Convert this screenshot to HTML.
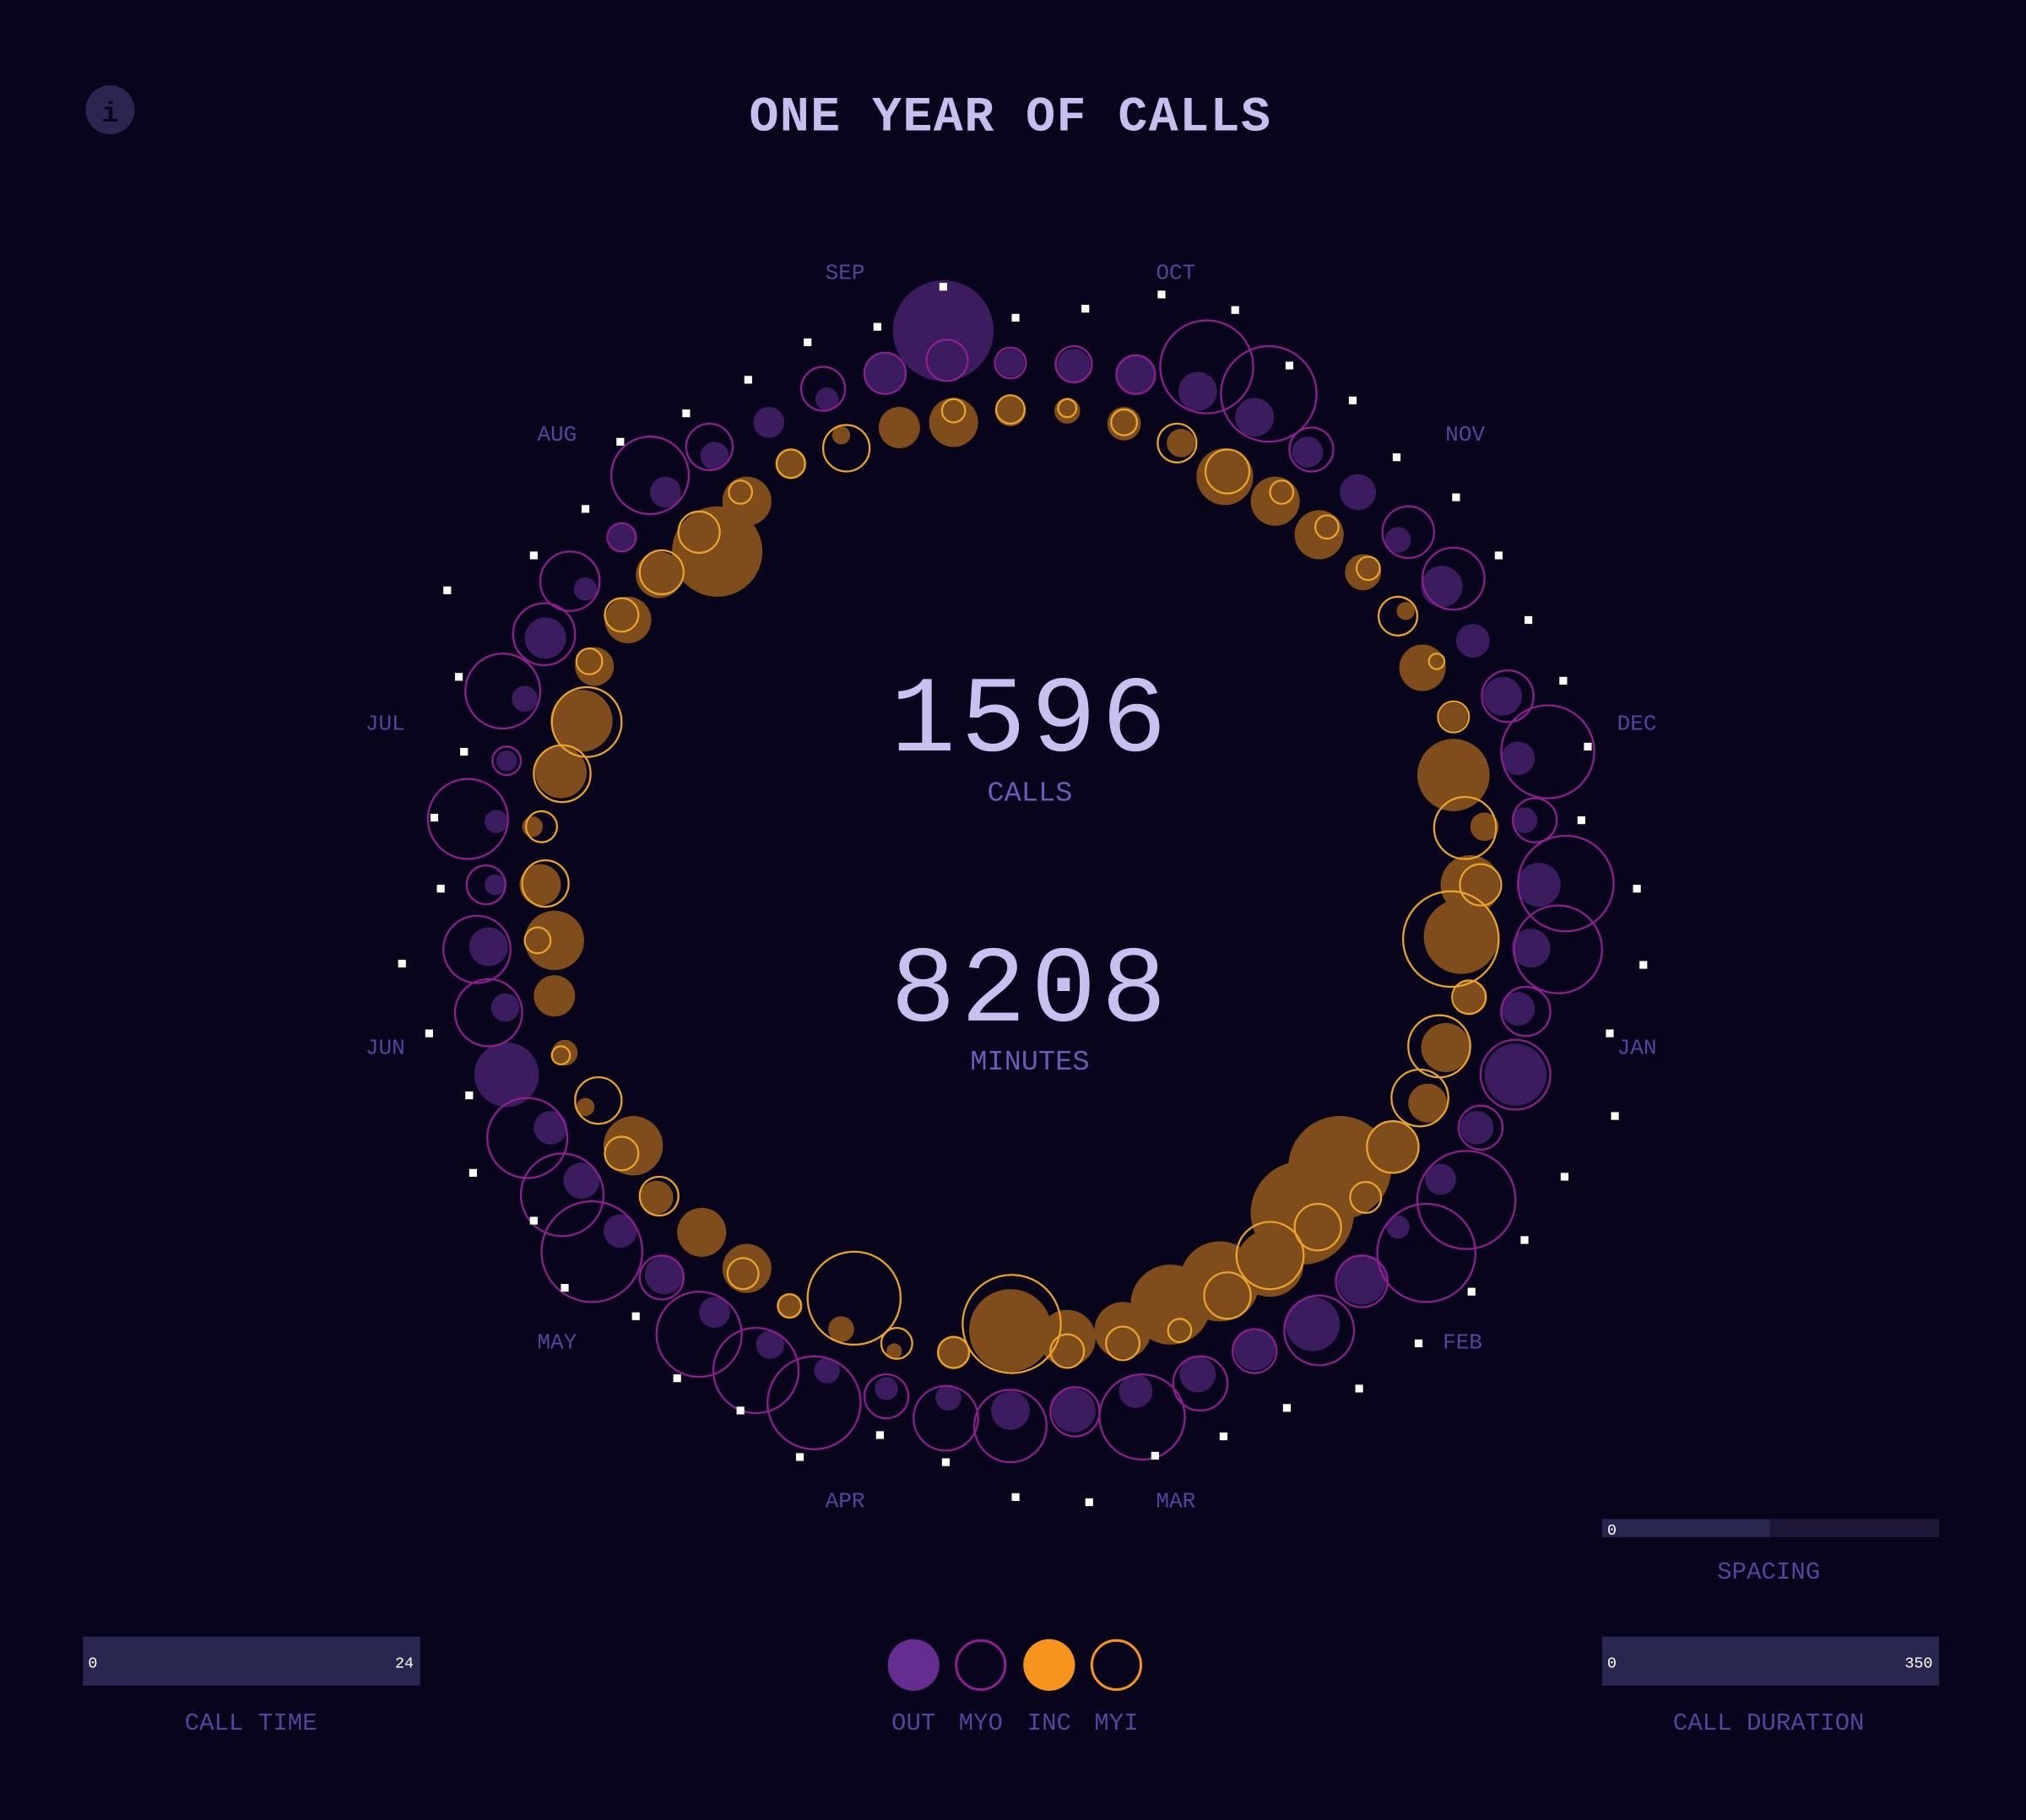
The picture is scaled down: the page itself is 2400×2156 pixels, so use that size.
<!DOCTYPE html>
<html><head><meta charset="utf-8"><style>
html,body{margin:0;padding:0;background:#07041c;}
svg{display:block}
text{font-family:"Liberation Mono","DejaVu Sans Mono",monospace}
</style></head><body>
<svg width="2400" height="2156" viewBox="0 0 1568 1409" xmlns="http://www.w3.org/2000/svg">
<rect width="1568" height="1409" fill="#07041c"/>
<circle cx="85" cy="85" r="19" fill="#2a2650"/>
<text x="85" y="94" font-size="22" font-weight="bold" fill="#07041c" text-anchor="middle" font-family="Liberation Serif">i</text>
<text x="782" y="101" font-size="38" font-weight="bold" fill="#c5bfee" text-anchor="middle" letter-spacing="1">ONE YEAR OF CALLS</text>

<g fill="#3e1f63" opacity="0.95">
<circle cx="730" cy="256" r="39"/><circle cx="685" cy="289" r="16"/><circle cx="782" cy="281" r="11"/><circle cx="831" cy="283" r="13"/><circle cx="879" cy="290" r="15"/><circle cx="927" cy="303" r="15"/><circle cx="971" cy="323" r="15"/><circle cx="1012" cy="350" r="12"/><circle cx="1051" cy="381" r="14"/><circle cx="1082" cy="418" r="10"/><circle cx="1116" cy="454" r="16"/><circle cx="1140" cy="496" r="13"/><circle cx="1163" cy="539" r="15"/><circle cx="1175" cy="587" r="13"/><circle cx="1180" cy="635" r="10"/><circle cx="1191" cy="685" r="17"/><circle cx="1185" cy="734" r="15"/><circle cx="1175" cy="781" r="13"/><circle cx="1173" cy="832" r="24"/><circle cx="1143" cy="873" r="13"/><circle cx="1115" cy="913" r="12"/><circle cx="1082" cy="950" r="9"/><circle cx="1054" cy="991" r="19"/><circle cx="1016" cy="1025" r="21"/><circle cx="971" cy="1045" r="16"/><circle cx="927" cy="1064" r="14"/><circle cx="879" cy="1077" r="13"/><circle cx="831" cy="1092" r="17"/><circle cx="782" cy="1092" r="15"/><circle cx="734" cy="1082" r="10"/><circle cx="686" cy="1075" r="9"/><circle cx="640" cy="1061" r="10"/><circle cx="596" cy="1041" r="11"/><circle cx="553" cy="1016" r="12"/><circle cx="514" cy="987" r="15"/><circle cx="480" cy="953" r="13"/><circle cx="450" cy="914" r="14"/><circle cx="426" cy="873" r="13"/><circle cx="392" cy="832" r="25"/><circle cx="391" cy="780" r="11"/><circle cx="378" cy="733" r="15"/><circle cx="383" cy="685" r="8"/><circle cx="384" cy="636" r="9"/><circle cx="392" cy="589" r="8"/><circle cx="406" cy="541" r="10"/><circle cx="422" cy="494" r="16"/><circle cx="453" cy="456" r="9"/><circle cx="482" cy="416" r="11"/><circle cx="515" cy="381" r="12"/><circle cx="553" cy="353" r="11"/><circle cx="595" cy="327" r="12"/><circle cx="640" cy="309" r="9"/>
</g>
<g fill="none" stroke="#8e1f8e" stroke-width="1.5">
<circle cx="733" cy="279" r="16"/><circle cx="934" cy="284" r="36"/><circle cx="982" cy="305" r="37"/><circle cx="1015" cy="348" r="17"/><circle cx="1090" cy="412" r="20"/><circle cx="1125" cy="448" r="24"/><circle cx="1167" cy="539" r="20"/><circle cx="1198" cy="582" r="36"/><circle cx="1188" cy="635" r="17"/><circle cx="1212" cy="684" r="37"/><circle cx="1206" cy="735" r="34"/><circle cx="1181" cy="783" r="19"/><circle cx="1173" cy="832" r="27"/><circle cx="1146" cy="873" r="17"/><circle cx="1135" cy="929" r="38"/><circle cx="1104" cy="970" r="38"/><circle cx="1054" cy="992" r="20"/><circle cx="1021" cy="1030" r="27"/><circle cx="971" cy="1046" r="17"/><circle cx="929" cy="1071" r="21"/><circle cx="884" cy="1097" r="33"/><circle cx="832" cy="1093" r="19"/><circle cx="782" cy="1104" r="28"/><circle cx="732" cy="1098" r="25"/><circle cx="686" cy="1081" r="17"/><circle cx="630" cy="1086" r="36"/><circle cx="585" cy="1061" r="33"/><circle cx="541" cy="1033" r="33"/><circle cx="512" cy="989" r="17"/><circle cx="458" cy="969" r="39"/><circle cx="435" cy="925" r="32"/><circle cx="408" cy="881" r="31"/><circle cx="378" cy="784" r="26"/><circle cx="369" cy="735" r="26"/><circle cx="376" cy="685" r="15"/><circle cx="362" cy="634" r="31"/><circle cx="392" cy="589" r="11"/><circle cx="389" cy="535" r="29"/><circle cx="421" cy="491" r="24"/><circle cx="441" cy="450" r="23"/><circle cx="481" cy="416" r="11"/><circle cx="503" cy="368" r="30"/><circle cx="549" cy="346" r="18"/><circle cx="637" cy="301" r="17"/><circle cx="685" cy="289" r="16"/><circle cx="782" cy="281" r="12"/><circle cx="831" cy="282" r="14"/><circle cx="879" cy="290" r="15"/>
</g>
<g fill="#f7941d" opacity="0.5">
<circle cx="555" cy="427" r="35"/><circle cx="578" cy="388" r="19"/><circle cx="510" cy="445" r="18"/><circle cx="486" cy="480" r="18"/><circle cx="460" cy="516" r="15"/><circle cx="450" cy="558" r="24"/><circle cx="434" cy="598" r="20"/><circle cx="412" cy="640" r="8"/><circle cx="418" cy="685" r="16"/><circle cx="429" cy="728" r="23"/><circle cx="429" cy="771" r="16"/><circle cx="437" cy="815" r="10"/><circle cx="453" cy="857" r="7"/><circle cx="490" cy="887" r="23"/><circle cx="508" cy="927" r="13"/><circle cx="543" cy="954" r="19"/><circle cx="578" cy="982" r="19"/><circle cx="611" cy="1011" r="10"/><circle cx="651" cy="1029" r="10"/><circle cx="692" cy="1046" r="6"/><circle cx="738" cy="1047" r="13"/><circle cx="782" cy="1030" r="32"/><circle cx="826" cy="1036" r="22"/><circle cx="869" cy="1030" r="22"/><circle cx="906" cy="1010" r="31"/><circle cx="944" cy="992" r="31"/><circle cx="983" cy="978" r="26"/><circle cx="1008" cy="939" r="40"/><circle cx="1037" cy="904" r="40"/><circle cx="1022" cy="952" r="20"/><circle cx="1078" cy="888" r="20"/><circle cx="1105" cy="854" r="15"/><circle cx="1119" cy="811" r="19"/><circle cx="1138" cy="772" r="13"/><circle cx="1131" cy="725" r="29"/><circle cx="1138" cy="685" r="23"/><circle cx="1149" cy="640" r="11"/><circle cx="1125" cy="600" r="28"/><circle cx="1125" cy="555" r="11"/><circle cx="1101" cy="517" r="18"/><circle cx="1088" cy="473" r="7"/><circle cx="1055" cy="443" r="14"/><circle cx="1021" cy="414" r="19"/><circle cx="987" cy="388" r="19"/><circle cx="948" cy="369" r="22"/><circle cx="914" cy="343" r="11"/><circle cx="870" cy="328" r="13"/><circle cx="826" cy="318" r="10"/><circle cx="782" cy="318" r="12"/><circle cx="738" cy="327" r="19"/><circle cx="696" cy="331" r="16"/><circle cx="651" cy="337" r="7"/><circle cx="612" cy="359" r="12"/>
</g>
<g fill="none" stroke="#e8a32c" stroke-width="1.5">
<circle cx="541" cy="412" r="16"/><circle cx="573" cy="381" r="9"/><circle cx="512" cy="443" r="17"/><circle cx="481" cy="476" r="13"/><circle cx="456" cy="512" r="10"/><circle cx="454" cy="559" r="27"/><circle cx="435" cy="599" r="22"/><circle cx="419" cy="640" r="12"/><circle cx="422" cy="684" r="18"/><circle cx="416" cy="728" r="10"/><circle cx="434" cy="817" r="7"/><circle cx="463" cy="852" r="18"/><circle cx="481" cy="893" r="13"/><circle cx="510" cy="926" r="15"/><circle cx="575" cy="986" r="12"/><circle cx="611" cy="1011" r="9"/><circle cx="661" cy="1005" r="36"/><circle cx="694" cy="1040" r="12"/><circle cx="738" cy="1047" r="12"/><circle cx="783" cy="1025" r="38"/><circle cx="826" cy="1046" r="13"/><circle cx="869" cy="1040" r="13"/><circle cx="913" cy="1030" r="9"/><circle cx="950" cy="1003" r="18"/><circle cx="983" cy="972" r="26"/><circle cx="1020" cy="950" r="18"/><circle cx="1057" cy="927" r="12"/><circle cx="1078" cy="888" r="20"/><circle cx="1099" cy="850" r="22"/><circle cx="1114" cy="810" r="24"/><circle cx="1137" cy="772" r="13"/><circle cx="1123" cy="727" r="37"/><circle cx="1146" cy="685" r="16"/><circle cx="1134" cy="641" r="24"/><circle cx="1125" cy="555" r="12"/><circle cx="1112" cy="512" r="6"/><circle cx="1082" cy="477" r="15"/><circle cx="1059" cy="440" r="9"/><circle cx="1027" cy="408" r="9"/><circle cx="992" cy="381" r="9"/><circle cx="950" cy="365" r="17"/><circle cx="911" cy="343" r="15"/><circle cx="870" cy="327" r="10"/><circle cx="826" cy="316" r="7"/><circle cx="782" cy="317" r="11"/><circle cx="738" cy="318" r="9"/><circle cx="655" cy="347" r="18"/><circle cx="612" cy="359" r="11"/>
</g>
<g fill="#ffffff">
<rect x="727" y="219" width="6" height="6"/><rect x="783" y="243" width="6" height="6"/><rect x="837" y="236" width="6" height="6"/><rect x="896" y="225" width="6" height="6"/><rect x="953" y="237" width="6" height="6"/><rect x="995" y="280" width="6" height="6"/><rect x="1044" y="307" width="6" height="6"/><rect x="1078" y="351" width="6" height="6"/><rect x="1124" y="382" width="6" height="6"/><rect x="1157" y="427" width="6" height="6"/><rect x="1180" y="477" width="6" height="6"/><rect x="1207" y="524" width="6" height="6"/><rect x="1226" y="575" width="6" height="6"/><rect x="1221" y="632" width="6" height="6"/><rect x="1264" y="685" width="6" height="6"/><rect x="1269" y="744" width="6" height="6"/><rect x="1243" y="797" width="6" height="6"/><rect x="1247" y="861" width="6" height="6"/><rect x="1208" y="908" width="6" height="6"/><rect x="1177" y="957" width="6" height="6"/><rect x="1136" y="997" width="6" height="6"/><rect x="1095" y="1037" width="6" height="6"/><rect x="1049" y="1072" width="6" height="6"/><rect x="993" y="1087" width="6" height="6"/><rect x="944" y="1109" width="6" height="6"/><rect x="891" y="1124" width="6" height="6"/><rect x="840" y="1160" width="6" height="6"/><rect x="783" y="1156" width="6" height="6"/><rect x="729" y="1129" width="6" height="6"/><rect x="678" y="1108" width="6" height="6"/><rect x="616" y="1125" width="6" height="6"/><rect x="570" y="1089" width="6" height="6"/><rect x="521" y="1064" width="6" height="6"/><rect x="489" y="1016" width="6" height="6"/><rect x="434" y="994" width="6" height="6"/><rect x="410" y="942" width="6" height="6"/><rect x="363" y="905" width="6" height="6"/><rect x="360" y="845" width="6" height="6"/><rect x="329" y="797" width="6" height="6"/><rect x="308" y="743" width="6" height="6"/><rect x="338" y="685" width="6" height="6"/><rect x="333" y="630" width="6" height="6"/><rect x="356" y="579" width="6" height="6"/><rect x="352" y="521" width="6" height="6"/><rect x="343" y="454" width="6" height="6"/><rect x="410" y="427" width="6" height="6"/><rect x="450" y="391" width="6" height="6"/><rect x="477" y="339" width="6" height="6"/><rect x="528" y="317" width="6" height="6"/><rect x="576" y="291" width="6" height="6"/><rect x="622" y="262" width="6" height="6"/><rect x="676" y="250" width="6" height="6"/>
</g>
<g font-size="17" fill="#54469a" text-anchor="middle">
<text x="654" y="216">SEP</text><text x="910" y="216">OCT</text><text x="1134" y="341">NOV</text><text x="1267" y="565">DEC</text><text x="1267" y="816">JAN</text><text x="1132" y="1044">FEB</text><text x="910" y="1167">MAR</text><text x="654" y="1167">APR</text><text x="431" y="1044">MAY</text><text x="298" y="816">JUN</text><text x="298" y="565">JUL</text><text x="431" y="341">AUG</text>
</g>
<g fill="#c8c0ee" text-anchor="middle">
<text x="798" y="581" font-size="84" letter-spacing="4">1596</text>
<text x="798" y="790" font-size="84" letter-spacing="4">8208</text>
</g>
<g fill="#6a5cb8" text-anchor="middle" font-size="22">
<text x="797" y="620">CALLS</text><text x="797" y="828">MINUTES</text>
</g>
<rect x="64" y="1267" width="261" height="38" fill="#29264f"/>
<rect x="1240" y="1267" width="261" height="38" fill="#29264f"/>
<rect x="1240" y="1176" width="261" height="14" fill="#1e1738"/>
<rect x="1240" y="1176" width="130" height="14" fill="#29264f"/>
<g fill="#ffffff" font-size="12">
<text x="68" y="1291">0</text><text x="320" y="1291" text-anchor="end">24</text>
<text x="1244" y="1291">0</text><text x="1496" y="1291" text-anchor="end">350</text>
<text x="1244" y="1188">0</text>
</g>
<circle cx="707" cy="1289" r="20" fill="#662d91"/>
<circle cx="759" cy="1289" r="19" fill="none" stroke="#8e1f8e" stroke-width="2"/>
<circle cx="812" cy="1289" r="20" fill="#f7941d"/>
<circle cx="864" cy="1289" r="19" fill="none" stroke="#f7941d" stroke-width="2"/>
<g font-size="19" fill="#54469a" text-anchor="middle">
<text x="707" y="1339">OUT</text><text x="759" y="1339">MYO</text><text x="812" y="1339">INC</text><text x="864" y="1339">MYI</text>
<text x="194" y="1339">CALL TIME</text><text x="1369" y="1339">CALL DURATION</text><text x="1369" y="1222">SPACING</text>
</g>
</svg>
</body></html>
